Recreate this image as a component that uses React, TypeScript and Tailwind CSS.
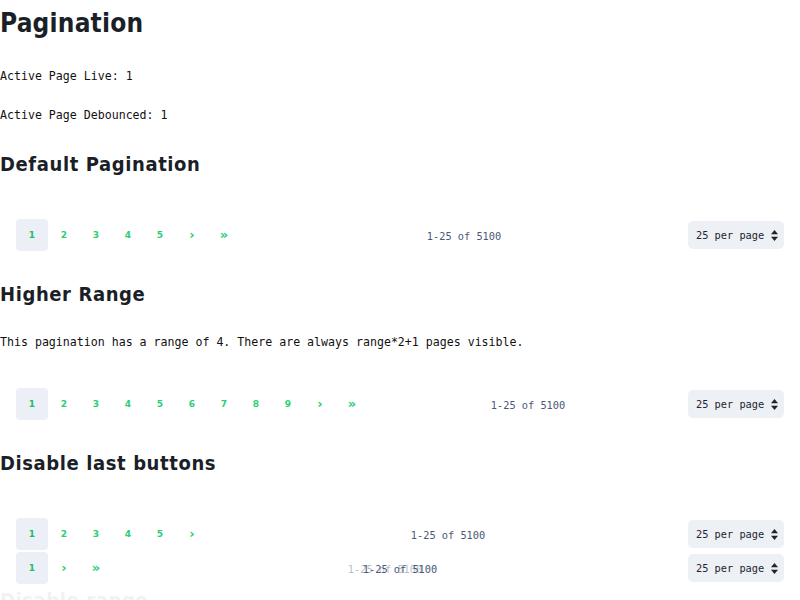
import React from 'react';

const mono = { fontFamily: '"DejaVu Sans Mono", monospace' };
const head = { fontFamily: '"DejaVu Sans Condensed", "DejaVu Sans", sans-serif' };

function PerPage() {
  return (
    <div className="relative w-[96px] h-[28px] rounded-[5px] bg-[#edf1f6] flex items-center pl-[8px] pt-[1px] text-[10.3px] text-[#1f2430]" style={mono}>
      25 per page
      <svg className="absolute right-[6px] top-[9px]" width="7" height="11" viewBox="0 0 7 11">
        <path d="M3.5 0 L7 4.2 H0 Z" fill="#1f2430" />
        <path d="M3.5 11 L7 6.8 H0 Z" fill="#1f2430" />
      </svg>
    </div>
  );
}

function PageBtn({ label, active }: { label: string; active?: boolean }) {
  const chevron = label === '›' || label === '»';
  return (
    <div
      className={`w-[32px] h-[32px] flex items-center justify-center rounded-[4px] pt-[2px] font-bold ${
        chevron ? 'text-[13px] pb-[2px]' : 'text-[9px]'
      } ${active ? 'bg-[#eceff5] text-[#27b869]' : 'text-[#2bcf6e]'}`}
      style={{ fontFamily: '"DejaVu Sans", sans-serif' }}
    >
      {label}
    </div>
  );
}

function Pager({ pages, next, last, ghost }: { pages: number; next?: boolean; last?: boolean; ghost?: boolean }) {
  const items: string[] = [];
  for (let i = 1; i <= pages; i++) items.push(String(i));
  if (next) items.push('›');
  if (last) items.push('»');
  return (
    <div className="flex items-center justify-between pl-[16px] pr-[16px] h-[32px]">
      <div className="flex">
        {items.map((it, i) => (
          <PageBtn key={i} label={it} active={i === 0} />
        ))}
      </div>
      <span className="relative pt-[3px] text-[10.3px] text-[#4a5878]" style={mono}>
        {ghost && <span className="absolute left-[-15px] top-[3px] opacity-40 whitespace-nowrap">1-25 of 5100</span>}
        <span className="relative">1-25 of 5100</span>
      </span>
      <PerPage />
    </div>
  );
}

function H2({ children, className = '' }: { children: React.ReactNode; className?: string }) {
  return (
    <h2 className={`text-[20px] leading-[28px] font-semibold tracking-[0.6px] text-[#1b1f27] ${className}`} style={head}>
      {children}
    </h2>
  );
}

export default function App() {
  return (
    <div className="w-[800px] h-[600px] overflow-hidden bg-white text-[#111]">
      <h1 className="text-[26px] leading-[46px] font-semibold tracking-[0.2px] text-[#1b1f27]" style={head}>
        Pagination
      </h1>
      <p className="mt-[21px] text-[11.6px] leading-[18px]" style={mono}>Active Page Live: 1</p>
      <p className="mt-[21px] text-[11.6px] leading-[18px]" style={mono}>Active Page Debounced: 1</p>

      <H2 className="mt-[26px]">Default Pagination</H2>
      <div className="mt-[41px]">
        <Pager pages={5} next last />
      </div>

      <H2 className="mt-[29px]">Higher Range</H2>
      <p className="mt-[25px] text-[11.6px] leading-[18px]" style={mono}>
        This pagination has a range of 4. There are always range*2+1 pages visible.
      </p>
      <div className="mt-[37px]">
        <Pager pages={9} next last />
      </div>

      <H2 className="mt-[29px]">Disable last buttons</H2>
      <div className="mt-[41px]">
        <Pager pages={5} next />
      </div>
      <div className="mt-[2px]">
        <Pager pages={1} next last ghost />
      </div>
      <H2 className="mt-[2px] opacity-[0.06]">Disable range</H2>
    </div>
  );
}
